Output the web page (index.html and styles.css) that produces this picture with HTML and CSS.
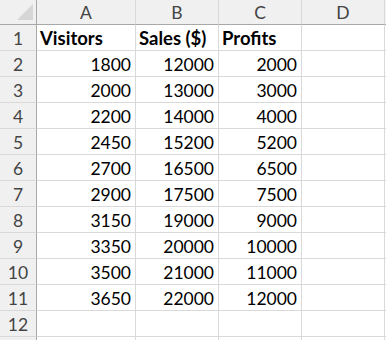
FILE: index.html
```html
<!DOCTYPE html>
<html>
<head>
<meta charset="utf-8">
<link rel="stylesheet" href="styles.css">
</head>
<body>
<div class="sheet">
  <div class="corner"><svg class="tri" width="16" height="16" viewBox="0 0 16 16"><polygon points="16,0 16,16 0,16" fill="#d6d6d6"/></svg></div>
  <div class="colhead">A</div><div class="colhead">B</div><div class="colhead">C</div><div class="colhead">D</div><div class="colhead last"></div>

  <div class="rowhead">1</div><div class="cell bold">Visitors</div><div class="cell bold">Sales ($)</div><div class="cell bold">Profits</div><div class="cell"></div><div class="cell last"></div>
  <div class="rowhead">2</div><div class="cell num">1800</div><div class="cell num">12000</div><div class="cell num">2000</div><div class="cell"></div><div class="cell last"></div>
  <div class="rowhead">3</div><div class="cell num">2000</div><div class="cell num">13000</div><div class="cell num">3000</div><div class="cell"></div><div class="cell last"></div>
  <div class="rowhead">4</div><div class="cell num">2200</div><div class="cell num">14000</div><div class="cell num">4000</div><div class="cell"></div><div class="cell last"></div>
  <div class="rowhead">5</div><div class="cell num">2450</div><div class="cell num">15200</div><div class="cell num">5200</div><div class="cell"></div><div class="cell last"></div>
  <div class="rowhead">6</div><div class="cell num">2700</div><div class="cell num">16500</div><div class="cell num">6500</div><div class="cell"></div><div class="cell last"></div>
  <div class="rowhead">7</div><div class="cell num">2900</div><div class="cell num">17500</div><div class="cell num">7500</div><div class="cell"></div><div class="cell last"></div>
  <div class="rowhead">8</div><div class="cell num">3150</div><div class="cell num">19000</div><div class="cell num">9000</div><div class="cell"></div><div class="cell last"></div>
  <div class="rowhead">9</div><div class="cell num">3350</div><div class="cell num">20000</div><div class="cell num">10000</div><div class="cell"></div><div class="cell last"></div>
  <div class="rowhead">10</div><div class="cell num">3500</div><div class="cell num">21000</div><div class="cell num">11000</div><div class="cell"></div><div class="cell last"></div>
  <div class="rowhead">11</div><div class="cell num">3650</div><div class="cell num">22000</div><div class="cell num">12000</div><div class="cell"></div><div class="cell last"></div>
  <div class="rowhead">12</div><div class="cell"></div><div class="cell"></div><div class="cell"></div><div class="cell"></div><div class="cell last"></div>
  <div class="rowhead"></div><div class="cell"></div><div class="cell"></div><div class="cell"></div><div class="cell"></div><div class="cell last"></div>
</div>
</body>
</html>
```
FILE: styles.css
```css
html, body {
  margin: 0;
  padding: 0;
  background: #ffffff;
  overflow: hidden;
}
.sheet {
  display: grid;
  grid-template-columns: 37px 99px 83px 83px 83px 1fr;
  grid-template-rows: 25px repeat(13, 26px);
  height: 340px;
  overflow: hidden;
  font-family: Lato, "Open Sans", sans-serif;
  font-size: 17.5px;
  color: #000;
}
.sheet > div {
  box-sizing: border-box;
  border-right: 1px solid #d9d9d9;
  border-bottom: 1px solid #d9d9d9;
  overflow: hidden;
  white-space: nowrap;
}
.sheet > div.last {
  border-right: none;
}
.corner {
  background: #f0f0f0;
  position: relative;
  border-right: 1px solid #a8a8a8 !important;
  border-bottom: 1px solid #a8a8a8 !important;
}
.tri {
  position: absolute;
  left: 17px;
  top: 4px;
}
.colhead {
  background: #f0f0f0;
  border-bottom: 1px solid #a8a8a8 !important;
  color: #444;
  display: flex;
  align-items: center;
  justify-content: center;
  padding-top: 1px;
}
.rowhead {
  background: #f0f0f0;
  border-right: 1px solid #a8a8a8 !important;
  color: #444;
  display: flex;
  align-items: center;
  justify-content: center;
  padding-top: 1px;
}
.cell {
  display: flex;
  align-items: center;
  padding: 1px 4px 0 3px;
}
.bold {
  font-weight: bold;
  font-size: 18.5px;
}
.num {
  justify-content: flex-end;
}
```
